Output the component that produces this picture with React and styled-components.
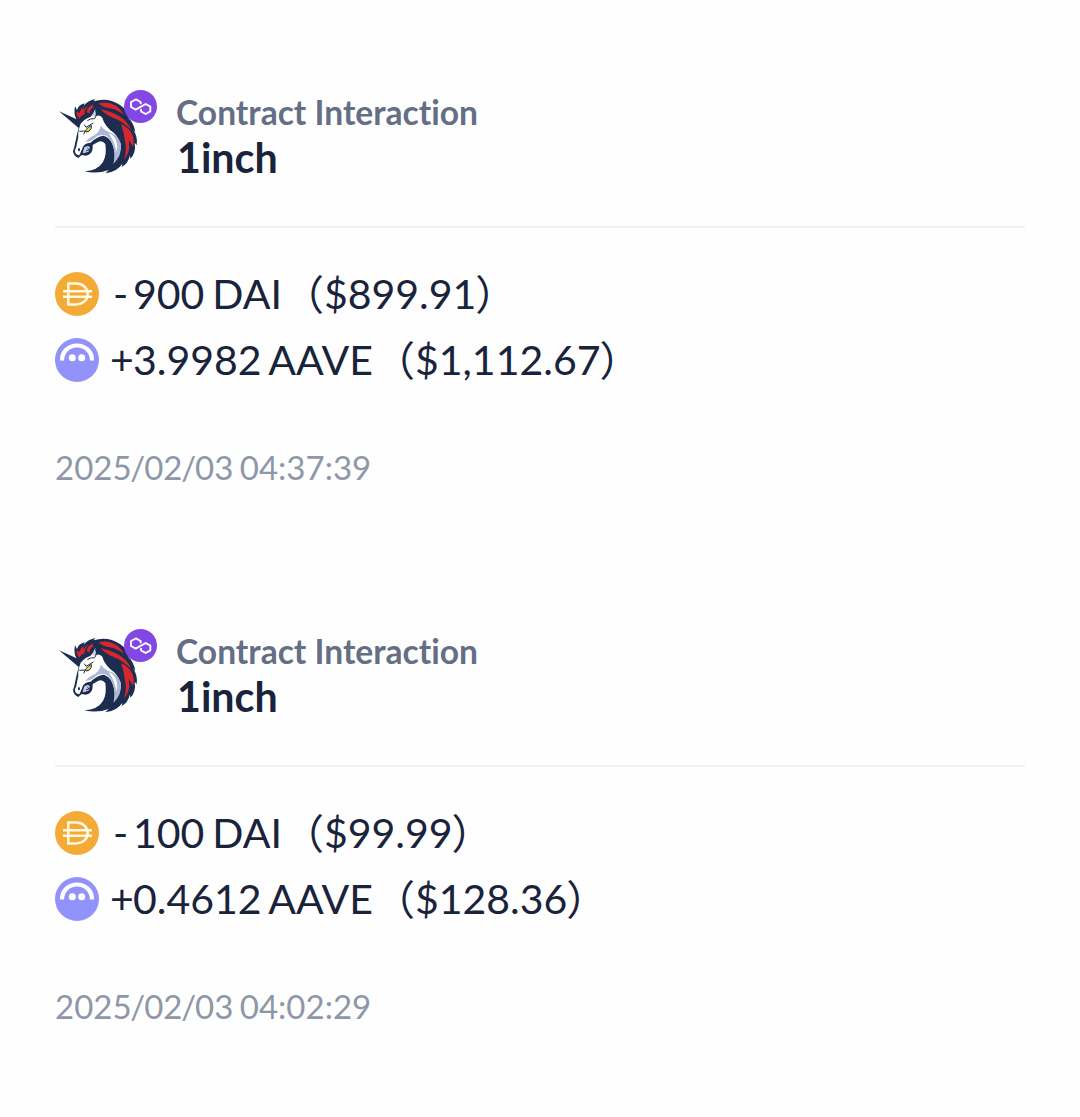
import React from "react";
import styled, { createGlobalStyle } from "styled-components";

const GlobalStyle = createGlobalStyle`
  body { margin: 0; background: #fefefe; }
`;

const Page = styled.main`
  display: flex;
  flex-direction: column;
  min-height: 1117px;
  background: #fefefe;
  color: #19233b;
  font-family: Lato, "Noto Sans CJK SC", sans-serif;
  font-variant-ligatures: none;
`;

const Card = styled.article`
  box-sizing: border-box;
  height: 539px;
  padding: 84px 55px 0;
`;

const Header = styled.header`
  display: flex;
  gap: 18px;
  height: 142px;
  border-bottom: 2px solid #f0f0f5;
`;

const Titles = styled.div`
  display: flex;
  flex-direction: column;
  padding-top: 8px;
`;

const Kind = styled.span`
  font-size: 33.6px;
  line-height: 40px;
  font-weight: 700;
  color: #646e84;
  white-space: nowrap;
`;

const Name = styled.span`
  padding-left: 1px;
  font-size: 41.2px;
  line-height: 50px;
  font-weight: 700;
`;

const Transfers = styled.ul`
  display: flex;
  flex-direction: column;
  list-style: none;
  margin: 0;
  padding: 33px 0 0;
`;

const Transfer = styled.li`
  display: flex;
  align-items: center;
  height: 66px;
  font-size: 41px;
  line-height: 66px;
  white-space: pre;
`;

const TokenIcon = styled.svg`
  flex: none;
  width: 44px;
  height: 44px;
`;

const Sign = styled.span`
  flex: none;
  box-sizing: border-box;
  width: 34px;
  padding-left: ${(p) => (p.$minus ? "14px" : "11px")};
`;

const Amount = styled.span`
  width: ${(p) => p.$width}px;
  word-spacing: -2.5px;
`;

const Paren = styled.span`
  height: 66px;
  margin-left: ${(p) => (p.$open ? "-1px" : "-1px")};
  padding-bottom: 4px;
  font-family: "Noto Sans CJK SC", sans-serif;
  font-weight: 400;
`;

const Time = styled.time`
  display: block;
  margin-top: 54px;
  font-size: 33px;
  line-height: 40px;
  color: #8e97a8;
  word-spacing: -2px;
`;

const Slash = styled.span`
  margin: 0 -1px 0 -1.3px;
`;

function DaiIcon() {
  return (
    <TokenIcon viewBox="0 0 44 44">
      <circle cx="22" cy="22" r="22" fill="#f3ab36" />
      <path d="M13.300 11.600H21c7 0 11.700 4.500 11.700 10.400S28 32.400 21 32.400h-7.700zM8 19.300h29M8 24.700h29" fill="none" stroke="#fff8e2" strokeWidth="2.500" />
    </TokenIcon>
  );
}

function AaveIcon() {
  return (
    <TokenIcon viewBox="0 0 44 44">
      <circle cx="22" cy="22" r="22" fill="#9292fb" />
      <path d="M7 22.500C7 13.500 13.500 7.500 22 7.500S37 13.500 37 22.500" fill="none" stroke="#fff" strokeWidth="4.200" />
      <circle cx="17.300" cy="19.700" r="3.500" fill="#fff" />
      <circle cx="26.700" cy="19.700" r="3.500" fill="#fff" />
    </TokenIcon>
  );
}

const LogoSvg = styled.svg`
  flex: none;
  width: 103px;
  height: 96px;
`;

function UnicornLogo() {
  return (
    <LogoSvg viewBox="15 0 309 288">
      <path fill="#1d2d4f" d="M27 82L80 106Q70 92 75 67L81 78Q86 62 104 58L101 65Q115 49 136 45L131 52Q173 39 210 63Q231 77 240 104L233 100Q253 119 256 145L249 136Q264 158 260 184L254 176Q259 206 241 224L240 214Q234 240 215 249L217 239Q202 263 166 268L176 258Q141 271 103 262Q143 260 159 234Q171 212 166 180Q157 168 144 174L128 183 128 192Q127 211 108 215L95 213 85 222Q70 216 69 202L73 188 81 151 86 132Z" />
      <path fill="#fff" d="M92 119Q106 103 121 99Q130 91 136 75Q139 89 136 97Q148 91 157 101Q160 114 170 127Q178 138 191 146Q208 160 210 186Q211 212 192 236Q198 206 187 180Q179 160 161 155Q144 157 130 169L122 176Q101 178 99 190L88 214Q74 212 75 199L79 188 85 158Q83 142 92 119Z" />
      <path fill="#d7272e" d="M83 97Q77 87 81 82L87 88Q92 74 101 69L100 80Q105 69 117 63Q103 77 103 92Q92 94 89 104ZM110 84Q112 69 130 60Q124 68 133 70Q120 73 118 89Z" />
      <path fill="#d7272e" d="M146 58Q172 50 198 65Q215 77 222 93Q202 76 178 73Q157 70 146 58ZM152 76Q183 82 208 97Q234 113 243 137Q217 111 189 101Q166 92 152 76ZM213 120Q237 130 247 152Q254 169 249 188Q242 176 236 168L238 190Q236 210 222 227Q231 198 225 171Q221 142 213 120Z" />
      <path fill="#aeb8d6" d="M153 124Q158 135 174 143Q204 150 213 179Q217 213 190 240Q199 210 188 182Q180 158 162 153Q144 151 134 163Q121 174 105 173Q117 162 127 157Q148 149 153 124Z" />
      <path fill="#fff" d="M176 147Q193 154 199 171Q204 189 199 207Q198 179 176 147Z" />
      <path fill="none" stroke="#1d2d4f" strokeWidth="3" strokeLinejoin="round" d="M88 142L106 141 101 151M103 122L108 130 130 117M137 78Q144 94 134 104Q120 103 112 110" />
      <path fill="#c9cfe3" d="M126 94L134 83Q138 94 132 99Z" />
      <path fill="#c9cfe3" stroke="#1d2d4f" strokeWidth="4" d="M101 189Q116 178 122 190L117 205 106 208 95 211Z" />
      <path fill="#f0d42b" stroke="#1d2d4f" strokeWidth="3" d="M107 138Q114 130 124 124Q127 133 117 142L108 144Z" />
      <ellipse cx="87" cy="197" rx="3" ry="5" fill="#1d2d4f" />
      <path fill="none" stroke="#1d2d4f" strokeWidth="3" d="M112 192L117 197 108 201" />
      <circle cx="271.500" cy="67.500" r="49.500" fill="#8247e5" />
      <path fill="none" stroke="#fff" strokeWidth="5.500" strokeLinejoin="round" d="M272 61V54L258 46 243 54V69L257 77 287 60 301 68V82L287 90 273 82V75" />
    </LogoSvg>
  );
}

const entries = [
  { dai: "900 DAI", daiUsd: "$899.91", aave: "3.9982 AAVE", aaveUsd: "$1,112.67", date: ["2025", "02", "03"], clock: "04:37:39" },
  { dai: "100 DAI", daiUsd: "$99.99", aave: "0.4612 AAVE", aaveUsd: "$128.36", date: ["2025", "02", "03"], clock: "04:02:29" },
];

function TokenRow({ icon, sign, amount, width, usd }) {
  return (
    <Transfer>
      {icon}
      <Sign $minus={sign === "-"}>{sign}</Sign>
      <Amount $width={width}>{amount}</Amount>
      <Paren $open>（</Paren>
      <span>{usd}</span>
      <Paren>）</Paren>
    </Transfer>
  );
}

export default function App() {
  return (
    <Page>
      <GlobalStyle />
      {entries.map((e) => (
        <Card key={e.clock}>
          <Header>
            <UnicornLogo />
            <Titles>
              <Kind>Contract Interaction</Kind>
              <Name>1inch</Name>
            </Titles>
          </Header>
          <Transfers>
            <TokenRow icon={<DaiIcon />} sign="-" amount={e.dai} width={151} usd={e.daiUsd} />
            <TokenRow icon={<AaveIcon />} sign="+" amount={e.aave} width={242} usd={e.aaveUsd} />
          </Transfers>
          <Time>
            {e.date[0]}<Slash>/</Slash>{e.date[1]}<Slash>/</Slash>{e.date[2]} {e.clock}
          </Time>
        </Card>
      ))}
    </Page>
  );
}
